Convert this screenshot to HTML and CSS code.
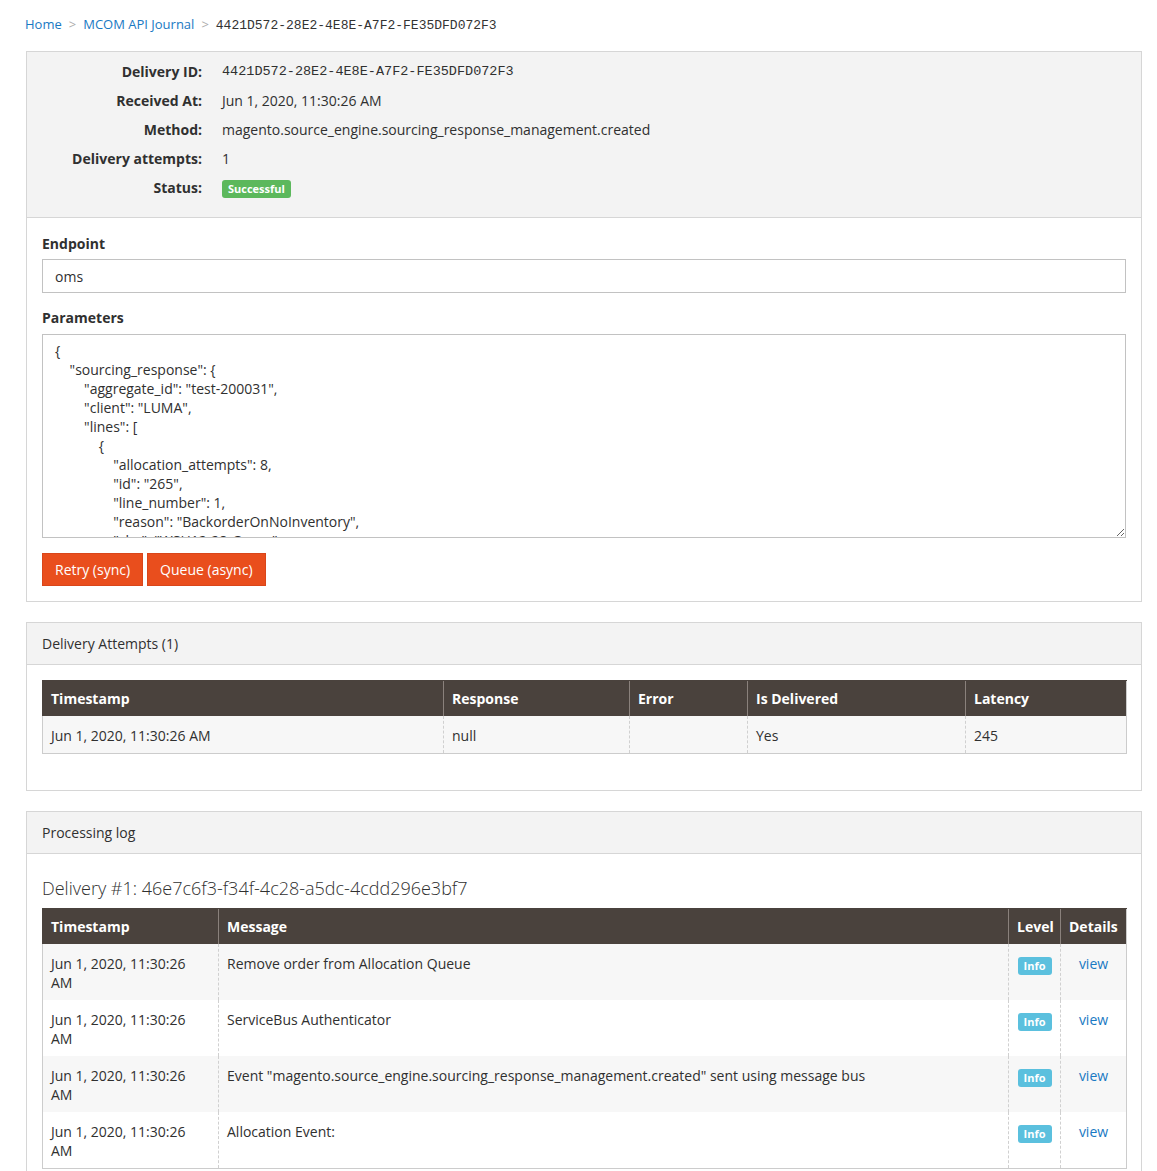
FILE: index.html
```html
<!DOCTYPE html>
<html lang="en">
<head>
<meta charset="utf-8">
<title>MCOM API Journal</title>
<link rel="stylesheet" href="styles.css">
</head>
<body>
<div class="page">
  <nav class="crumbs">
    <a href="#" class="crumb-link">Home</a><span class="crumb-sep">&gt;</span><a href="#" class="crumb-link">MCOM API Journal</a><span class="crumb-sep">&gt;</span><span class="mono crumb-cur">4421D572-28E2-4E8E-A7F2-FE35DFD072F3</span>
  </nav>

  <section class="panel">
    <div class="summary">
      <div class="s-label">Delivery ID:</div><div class="s-value mono">4421D572-28E2-4E8E-A7F2-FE35DFD072F3</div>
      <div class="s-label">Received At:</div><div class="s-value">Jun 1, 2020, 11:30:26 AM</div>
      <div class="s-label">Method:</div><div class="s-value">magento.source_engine.sourcing_response_management.created</div>
      <div class="s-label">Delivery attempts:</div><div class="s-value">1</div>
      <div class="s-label">Status:</div><div class="s-value"><span class="badge badge-success">Successful</span></div>
    </div>
    <div class="panel-body form-body">
      <label class="f-label" for="endpoint">Endpoint</label>
      <input id="endpoint" class="f-input" type="text" value="oms">
      <label class="f-label f-label-gap" for="params">Parameters</label>
      <textarea id="params" class="f-area">{
    "sourcing_response": {
        "aggregate_id": "test-200031",
        "client": "LUMA",
        "lines": [
            {
                "allocation_attempts": 8,
                "id": "265",
                "line_number": 1,
                "reason": "BackorderOnNoInventory",
                "sku": "WSH12-28-Green",
                "source_code": "default"
            }
        ]
    }
}</textarea>
      <div class="actions">
        <button class="btn">Retry (sync)</button>
        <button class="btn">Queue (async)</button>
      </div>
    </div>
  </section>

  <section class="panel">
    <header class="panel-head">Delivery Attempts (1)</header>
    <div class="panel-body attempts-body">
      <table class="grid">
        <colgroup>
          <col class="a-ts"><col class="a-resp"><col class="a-err"><col class="a-del"><col class="a-lat">
        </colgroup>
        <thead>
          <tr><th>Timestamp</th><th>Response</th><th>Error</th><th>Is Delivered</th><th>Latency</th></tr>
        </thead>
        <tbody>
          <tr><td>Jun 1, 2020, 11:30:26 AM</td><td>null</td><td></td><td>Yes</td><td>245</td></tr>
        </tbody>
      </table>
    </div>
  </section>

  <section class="panel">
    <header class="panel-head">Processing log</header>
    <div class="panel-body">
      <h3 class="delivery-title">Delivery #1: 46e7c6f3-f34f-4c28-a5dc-4cdd296e3bf7</h3>
      <table class="grid log">
        <colgroup>
          <col class="l-ts"><col class="l-msg"><col class="l-lvl"><col class="l-det">
        </colgroup>
        <thead>
          <tr><th>Timestamp</th><th>Message</th><th>Level</th><th>Details</th></tr>
        </thead>
        <tbody>
          <tr><td>Jun 1, 2020, 11:30:26 AM</td><td>Remove order from Allocation Queue</td><td class="center"><span class="badge badge-info">Info</span></td><td class="center"><a href="#" class="link">view</a></td></tr>
          <tr><td>Jun 1, 2020, 11:30:26 AM</td><td>ServiceBus Authenticator</td><td class="center"><span class="badge badge-info">Info</span></td><td class="center"><a href="#" class="link">view</a></td></tr>
          <tr><td>Jun 1, 2020, 11:30:26 AM</td><td>Event "magento.source_engine.sourcing_response_management.created" sent using message bus</td><td class="center"><span class="badge badge-info">Info</span></td><td class="center"><a href="#" class="link">view</a></td></tr>
          <tr><td>Jun 1, 2020, 11:30:26 AM</td><td>Allocation Event:</td><td class="center"><span class="badge badge-info">Info</span></td><td class="center"><a href="#" class="link">view</a></td></tr>
        </tbody>
      </table>
    </div>
  </section>
</div>
</body>
</html>
```
FILE: styles.css
```css
* { box-sizing: border-box; }

html, body {
  margin: 0;
  padding: 0;
  background: #ffffff;
}

body {
  font-family: "Open Sans", "Liberation Sans", sans-serif;
  font-size: 14px;
  line-height: 19px;
  color: #303030;
}

.page {
  padding: 14px 15px 30px 26px;
}

.mono {
  font-family: "Liberation Mono", "DejaVu Sans Mono", monospace;
}

/* breadcrumbs */
.crumbs {
  font-size: 13px;
  line-height: 20px;
  margin-left: -1px;
  margin-bottom: 15px;
}
.crumb-link {
  color: #1979c3;
  text-decoration: none;
}
.crumb-sep {
  color: #adadad;
  margin: 0 7px;
}
.crumb-cur {
  font-size: 13px;
  color: #333333;
}

/* panels */
.panel {
  border: 1px solid #d6d6d6;
  margin-bottom: 20px;
  background: #ffffff;
}

.summary {
  background: #f3f3f3;
  border-bottom: 1px solid #d6d6d6;
  display: grid;
  grid-template-columns: 175px 1fr;
  column-gap: 20px;
  row-gap: 10px;
  padding: 10px 0 19px;
}
.s-label {
  text-align: right;
  font-weight: 700;
  color: #303030;
}
.s-value {
  color: #303030;
}
.s-value.mono {
  font-size: 13.5px;
}

.badge {
  display: inline-block;
  color: #ffffff;
  font-weight: 700;
  font-size: 11px;
  line-height: 18px;
  height: 18px;
  border-radius: 3px;
  padding: 0 6px;
  vertical-align: middle;
}
.badge-success {
  background: #5cb85c;
}
.badge-info {
  background: #5bc0de;
  width: 34px;
  padding: 0;
  text-align: center;
  margin-top: 1px;
}

.panel-body {
  padding: 15px;
}

.panel-head {
  background: #f3f3f3;
  border-bottom: 1px solid #d6d6d6;
  padding: 11px 15px;
  color: #303030;
}

/* form */
.form-body {
  padding-top: 16px;
}
.f-label {
  display: block;
  font-weight: 700;
  margin-bottom: 6px;
}
.f-label-gap {
  margin-top: 15px;
  margin-bottom: 7px;
}
.f-input {
  display: block;
  width: 100%;
  height: 34px;
  border: 1px solid #c2c2c2;
  padding: 0 12px;
  font-family: inherit;
  font-size: 14px;
  color: #303030;
  background: #ffffff;
  outline: none;
}
.f-area {
  display: block;
  width: 100%;
  height: 204px;
  border: 1px solid #c2c2c2;
  padding: 6px 12px;
  font-family: inherit;
  font-size: 14px;
  line-height: 19px;
  color: #303030;
  background: #ffffff;
  resize: vertical;
  outline: none;
  overflow: hidden;
}

.actions {
  margin-top: 15px;
  display: flex;
  gap: 4px;
}
.btn {
  font-family: inherit;
  font-size: 14px;
  line-height: 19px;
  height: 33px;
  padding: 6px 12px;
  background: #e94e1d;
  border: 1px solid #d9461a;
  color: #ffffff;
  cursor: pointer;
}

/* tables */
.attempts-body {
  padding-bottom: 36px;
}

.grid {
  width: 100%;
  border-collapse: collapse;
  table-layout: fixed;
  border: 1px solid #cccccc;
}
.grid th {
  background: #4a423d;
  color: #ffffff;
  font-weight: 700;
  text-align: left;
  padding: 8px 8px 8px;
  border-left: 1px solid #8a817c;
  border-top: 1px solid #4a423d;
}
.grid th:first-child {
  border-left-color: #4a423d;
}
.grid td {
  padding: 10px 8px 8px;
  vertical-align: top;
  border-left: 1px dashed #d0d0d0;
}
.grid td:first-child {
  border-left: none;
}
.grid tbody tr:nth-child(odd) td {
  background: #f7f7f7;
}
.grid tbody tr:nth-child(even) td {
  background: #ffffff;
}
.grid td.center {
  text-align: center;
}

.a-ts { width: 401px; }
.a-resp { width: 186px; }
.a-err { width: 118px; }
.a-del { width: 218px; }
.a-lat { width: 161px; }

.l-ts { width: 176px; }
.l-msg { width: 790px; }
.l-lvl { width: 52px; }
.l-det { width: 66px; }

.delivery-title {
  font-size: 18px;
  font-weight: 300;
  line-height: 24px;
  color: #303030;
  margin: 7px 0 8px;
}

.link {
  color: #1979c3;
  text-decoration: none;
}
```
